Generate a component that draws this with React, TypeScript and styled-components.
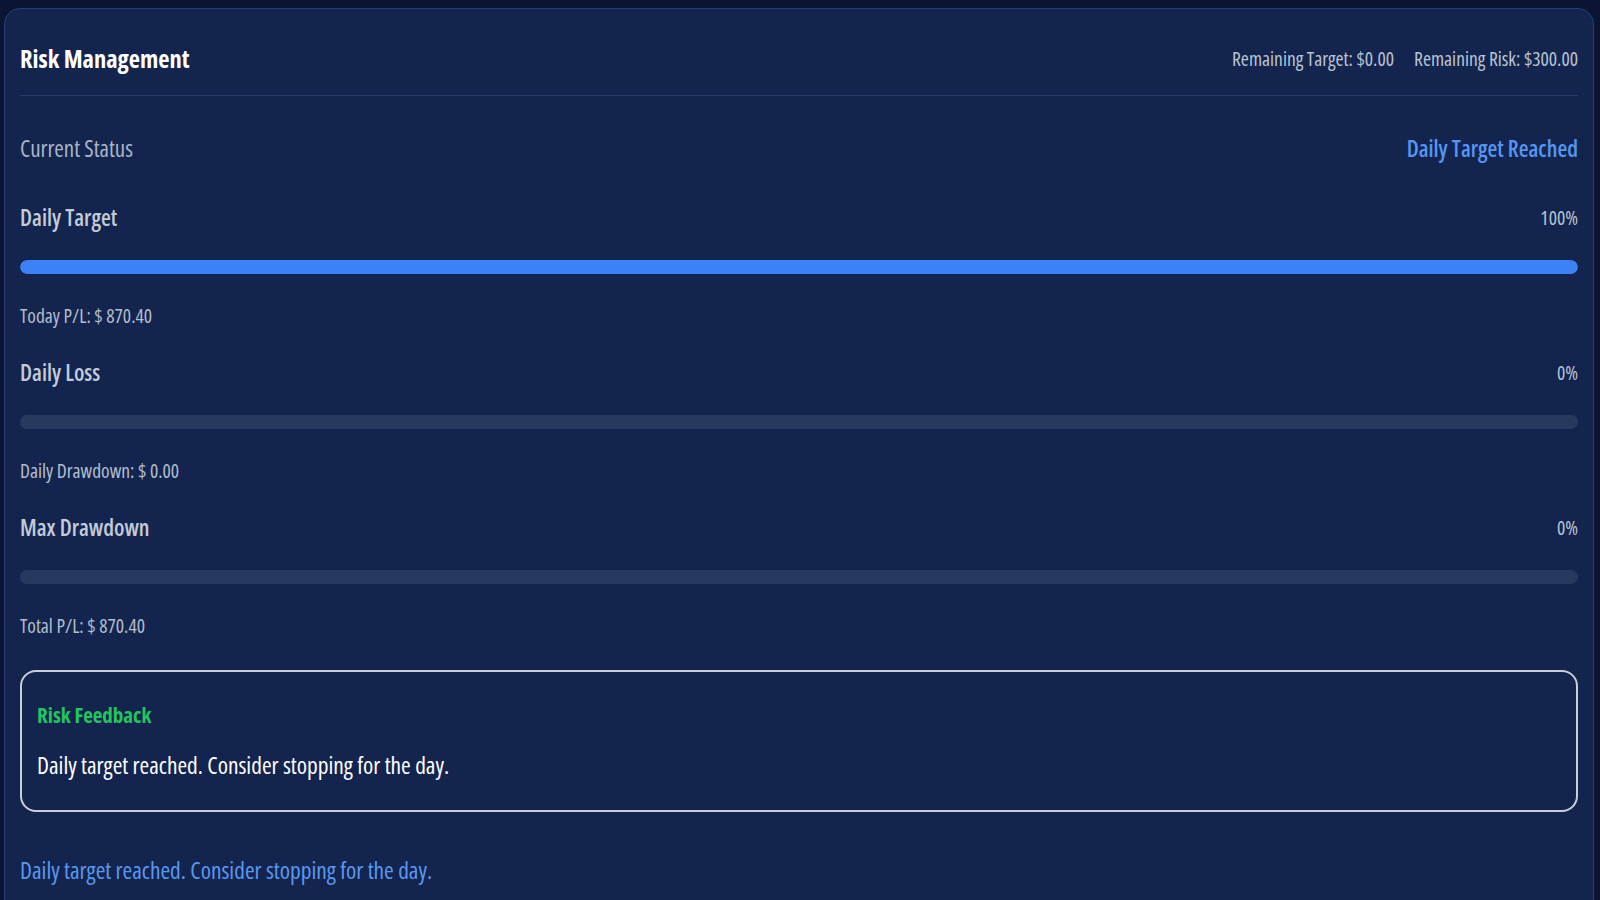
import * as React from 'react';
import styled, { createGlobalStyle } from 'styled-components';

const GlobalStyle = createGlobalStyle`
  html, body {
    margin: 0;
    padding: 0;
    background: #0b1430;
    font-family: "Open Sans", "Liberation Sans", sans-serif;
    font-stretch: 75%;
  }
`;

const Page = styled.div`
  padding: 8px 6px 0 4px;
  height: 900px;
  box-sizing: border-box;
  overflow: hidden;
`;

const Card = styled.section`
  background: #13254f;
  border: 1px solid #23407a;
  border-radius: 16px;
  padding: 0 15px 40px 15px;
  min-height: 920px;
  box-sizing: border-box;
`;

const Header = styled.header`
  display: flex;
  align-items: center;
  justify-content: space-between;
  height: 87px;
  padding-top: 12px;
  box-sizing: border-box;
  border-bottom: 1px solid #263c68;
`;

const Title = styled.h2`
  margin: 0;
  font-size: 24.5px;
  font-weight: 700;
  color: #ffffff;
`;

const Remaining = styled.div`
  display: flex;
  gap: 20px;
  font-size: 19.5px;
  color: #b9c3d1;
`;

const StatusRow = styled.div`
  display: flex;
  align-items: center;
  justify-content: space-between;
  margin-top: 38px;
  height: 28px;
`;

const StatusLabel = styled.span`
  font-size: 23px;
  color: #a9b4c5;
`;

const StatusValue = styled.span`
  font-size: 22.5px;
  font-weight: 600;
  color: #5596f2;
`;

const Metric = styled.div`
  display: flex;
  flex-direction: column;
  margin-top: 41px;

  & + & {
    margin-top: 30px;
  }
`;

const MetricHead = styled.div`
  display: flex;
  align-items: center;
  justify-content: space-between;
  height: 28px;
`;

const MetricLabel = styled.span`
  font-size: 22.5px;
  font-weight: 600;
  color: #c3cbd7;
`;

const MetricPct = styled.span`
  font-size: 19.5px;
  color: #b9c3d1;
`;

const Track = styled.div`
  margin-top: 29px;
  height: 14px;
  border-radius: 7px;
  background: #27395f;
  overflow: hidden;
`;

const Fill = styled.div`
  height: 100%;
  border-radius: 7px;
  background: #3b82f6;
`;

const MetricNote = styled.div`
  margin-top: 30px;
  height: 24px;
  line-height: 24px;
  font-size: 19.5px;
  color: #b3bdcc;
`;

const Feedback = styled.div`
  margin-top: 32px;
  height: 142px;
  box-sizing: border-box;
  border: 2px solid #c9cdd6;
  border-radius: 16px;
  padding: 30px 15px 0 15px;
`;

const FeedbackTitle = styled.div`
  font-size: 21px;
  font-weight: 700;
  color: #22c55e;
  line-height: 26px;
`;

const FeedbackText = styled.div`
  margin-top: 24px;
  font-size: 23.4px;
  line-height: 26px;
  color: #ffffff;
`;

const Footnote = styled.div`
  margin-top: 44px;
  font-size: 23.4px;
  line-height: 28px;
  color: #5a98ee;
`;

type MetricData = {
  label: string;
  pct: number;
  note: string;
};

const metrics: MetricData[] = [
  { label: 'Daily Target', pct: 100, note: 'Today P/L: $ 870.40' },
  { label: 'Daily Loss', pct: 0, note: 'Daily Drawdown: $ 0.00' },
  { label: 'Max Drawdown', pct: 0, note: 'Total P/L: $ 870.40' },
];

export default function App() {
  return (
    <>
      <GlobalStyle />
      <Page>
        <Card>
          <Header>
            <Title>Risk Management</Title>
            <Remaining>
              <span>Remaining Target: $0.00</span>
              <span>Remaining Risk: $300.00</span>
            </Remaining>
          </Header>

          <StatusRow>
            <StatusLabel>Current Status</StatusLabel>
            <StatusValue>Daily Target Reached</StatusValue>
          </StatusRow>

          {metrics.map((m) => (
            <Metric key={m.label}>
              <MetricHead>
                <MetricLabel>{m.label}</MetricLabel>
                <MetricPct>{m.pct}%</MetricPct>
              </MetricHead>
              <Track>
                <Fill style={{ width: `${m.pct}%` }} />
              </Track>
              <MetricNote>{m.note}</MetricNote>
            </Metric>
          ))}

          <Feedback>
            <FeedbackTitle>Risk Feedback</FeedbackTitle>
            <FeedbackText>Daily target reached. Consider stopping for the day.</FeedbackText>
          </Feedback>

          <Footnote>Daily target reached. Consider stopping for the day.</Footnote>
        </Card>
      </Page>
    </>
  );
}
